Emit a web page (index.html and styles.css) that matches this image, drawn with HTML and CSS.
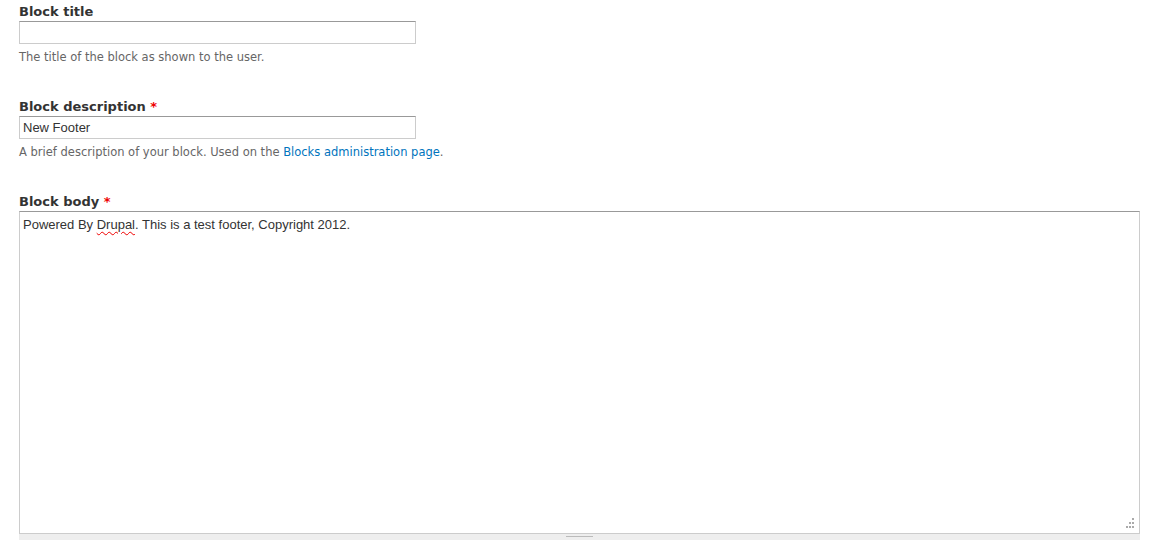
FILE: index.html
```html
<!DOCTYPE html>
<html lang="en">
<head>
    <meta charset="UTF-8">
    <title>Add block</title>
    <link rel="stylesheet" href="styles.css">
</head>
<body>
    <form class="block-form">
        <div class="form-item">
            <label for="edit-title">Block title</label>
            <input type="text" id="edit-title" class="form-text">
            <div class="description">The title of the block as shown to the user.</div>
        </div>

        <div class="form-item">
            <label for="edit-info">Block description <span class="required">*</span></label>
            <input type="text" id="edit-info" class="form-text" value="New Footer">
            <div class="description">A brief description of your block. Used on the <a href="#">Blocks administration page</a>.</div>
        </div>

        <div class="form-item">
            <label>Block body <span class="required">*</span></label>
            <div class="form-textarea">
                <div class="textarea-body">Powered By <span class="misspelled">Drupal</span>. This is a test footer, Copyright 2012.</div>
                <svg class="resize-corner" width="10" height="10" viewBox="0 0 10 10">
                    <rect x="8" y="0" width="2" height="2" fill="#aaa"/>
                    <rect x="5" y="4" width="2" height="2" fill="#aaa"/>
                    <rect x="8" y="4" width="2" height="2" fill="#aaa"/>
                    <rect x="2" y="8" width="2" height="2" fill="#aaa"/>
                    <rect x="5" y="8" width="2" height="2" fill="#aaa"/>
                    <rect x="8" y="8" width="2" height="2" fill="#aaa"/>
                </svg>
            </div>
            <div class="grippie"><span class="grip"></span></div>
        </div>
    </form>
</body>
</html>
```

FILE: styles.css
```css
body {
    margin: 0;
    background: #fff;
    color: #333;
    font-family: "DejaVu Sans", Verdana, sans-serif;
    overflow: hidden;
}
.block-form {
    padding: 3px 0 0 19px;
}
.form-item {
    margin-bottom: 33px;
}
.form-item label {
    display: block;
    font-weight: bold;
    font-size: 13px;
    line-height: 18px;
    color: #333;
}
.required {
    color: #e00;
}
.form-text {
    display: block;
    box-sizing: border-box;
    width: 397px;
    height: 23px;
    margin: 0;
    padding: 2px 3px;
    border: 1px solid #ccc;
    border-top-color: #999;
    font-family: "Liberation Sans", Arial, sans-serif;
    font-size: 13px;
    color: #333;
    outline: none;
}
.description {
    margin-top: 6px;
    font-size: 11.5px;
    line-height: 15px;
    color: #666;
}
.description a {
    color: #0074bd;
    text-decoration: none;
}
.form-textarea {
    position: relative;
    box-sizing: border-box;
    width: 1121px;
    height: 322px;
    border: 1px solid #ccc;
    border-top-color: #999;
    border-bottom: 0;
}
.textarea-body {
    padding: 4px 3px;
    font-family: "Liberation Sans", Arial, sans-serif;
    font-size: 13px;
    line-height: 17px;
    color: #333;
}
.misspelled {
    text-decoration: underline wavy #e00;
    text-decoration-thickness: 1px;
    text-underline-offset: 2px;
}
.resize-corner {
    position: absolute;
    right: 5px;
    bottom: 5px;
}
.grippie {
    box-sizing: border-box;
    width: 1121px;
    height: 10px;
    background: #eee;
    border-top: 1px solid #ccc;
    display: flex;
    justify-content: center;
    padding-top: 2px;
}
.grip {
    display: block;
    width: 27px;
    height: 3px;
    border-top: 1px solid #bbb;
    border-bottom: 1px solid #bbb;
}
```
